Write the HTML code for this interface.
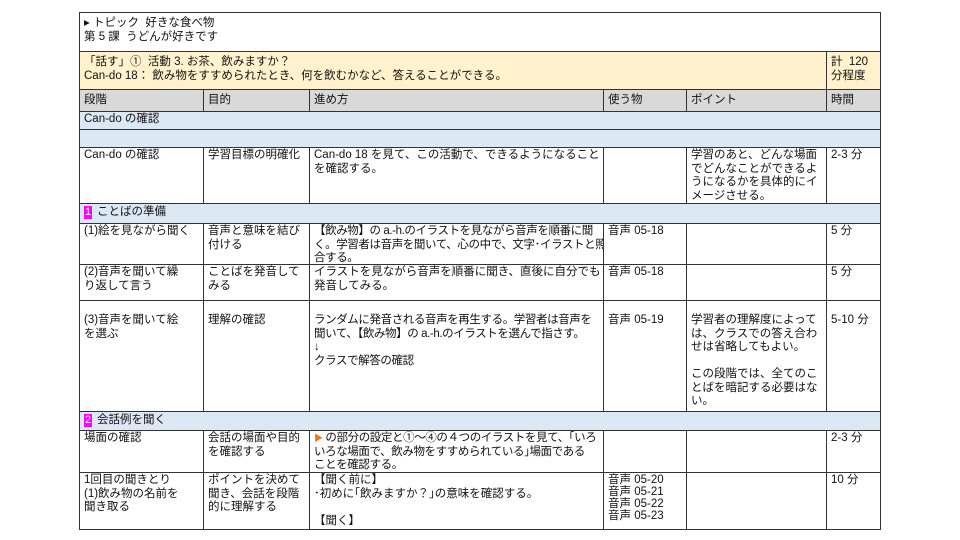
<!DOCTYPE html><html><head><meta charset="utf-8"><style>
body{margin:0;width:960px;height:540px;background:#fff;position:relative;overflow:hidden;font-family:"Liberation Sans","Noto Sans CJK JP",sans-serif;font-size:11.5px;line-height:13.5px;color:#111}
.c{position:absolute;box-sizing:border-box;border:1.5px solid #333;padding:1px 4px;margin:0;overflow:hidden;white-space:nowrap}
.y{background:#fff2cc}.g{background:#d9d9d9}.b{background:#dde8f5}
.t{letter-spacing:-0.4px}
.n{display:inline-block;background:#f0f;color:#fff;width:8px;height:13px;line-height:13px;text-align:center;margin-right:5px;font-size:11px}
</style></head><body>
<div class="c" style="left:79px;top:12px;width:802px;height:40px;padding-top:4px">▸ トピック&nbsp; 好きな食べ物<br>第 5 課&nbsp; うどんが好きです</div>
<div class="c y" style="left:79px;top:51px;width:748px;height:39px;padding-top:4px">「話す」①&nbsp; 活動 3. お茶、飲みますか？<br>Can-do 18：&nbsp;飲み物をすすめられたとき、何を飲むかなど、答えることができる。</div>
<div class="c y" style="left:826px;top:51px;width:55px;height:39px;padding-top:4px">計&nbsp; 120<br>分程度</div>
<div class="c g" style="left:79px;top:89px;width:125px;height:23px;padding-top:4px">段階</div>
<div class="c g" style="left:203px;top:89px;width:107px;height:23px;padding-top:4px">目的</div>
<div class="c g" style="left:309px;top:89px;width:295px;height:23px;padding-top:4px">進め方</div>
<div class="c g" style="left:603px;top:89px;width:84px;height:23px;padding-top:4px">使う物</div>
<div class="c g" style="left:686px;top:89px;width:141px;height:23px;padding-top:4px">ポイント</div>
<div class="c g" style="left:826px;top:89px;width:55px;height:23px;padding-top:4px">時間</div>
<div class="c b" style="left:79px;top:111px;width:802px;height:19px">Can-do の確認</div>
<div class="c b" style="left:79px;top:129px;width:802px;height:19px"></div>
<div class="c" style="left:79px;top:147px;width:125px;height:57px">Can-do の確認</div>
<div class="c" style="left:203px;top:147px;width:107px;height:57px">学習目標の明確化</div>
<div class="c" style="left:309px;top:147px;width:295px;height:57px">Can-do 18 を見て、この活動で、できるようになること<br>を確認する。</div>
<div class="c" style="left:603px;top:147px;width:84px;height:57px"></div>
<div class="c" style="left:686px;top:147px;width:141px;height:57px">学習のあと、どんな場面<br>でどんなことができるよ<br>うになるかを具体的にイ<br>メージさせる。</div>
<div class="c" style="left:826px;top:147px;width:55px;height:57px">2-3 分</div>
<div class="c b" style="left:79px;top:203px;width:802px;height:21px;padding-top:2px"><span class="n">1</span>ことばの準備</div>
<div class="c" style="left:79px;top:223px;width:125px;height:42px">(1)絵を見ながら聞く</div>
<div class="c" style="left:203px;top:223px;width:107px;height:42px">音声と意味を結び<br>付ける</div>
<div class="c t" style="left:309px;top:223px;width:295px;height:42px">【飲み物】の a.-h.のイラストを見ながら音声を順番に聞<br>く。学習者は音声を聞いて、心の中で、文字･イラストと照<br>合する。</div>
<div class="c" style="left:603px;top:223px;width:84px;height:42px">音声 05-18</div>
<div class="c" style="left:686px;top:223px;width:141px;height:42px"></div>
<div class="c" style="left:826px;top:223px;width:55px;height:42px">5 分</div>
<div class="c" style="left:79px;top:264px;width:125px;height:37px">(2)音声を聞いて繰<br>り返して言う</div>
<div class="c" style="left:203px;top:264px;width:107px;height:37px">ことばを発音して<br>みる</div>
<div class="c" style="left:309px;top:264px;width:295px;height:37px">イラストを見ながら音声を順番に聞き、直後に自分でも<br>発音してみる。</div>
<div class="c" style="left:603px;top:264px;width:84px;height:37px">音声 05-18</div>
<div class="c" style="left:686px;top:264px;width:141px;height:37px"></div>
<div class="c" style="left:826px;top:264px;width:55px;height:37px">5 分</div>
<div class="c" style="left:79px;top:300px;width:125px;height:112px;padding-top:13px">(3)音声を聞いて絵<br>を選ぶ</div>
<div class="c" style="left:203px;top:300px;width:107px;height:112px;padding-top:13px">理解の確認</div>
<div class="c t" style="left:309px;top:300px;width:295px;height:112px;padding-top:13px">ランダムに発音される音声を再生する。学習者は音声を<br>聞いて、【飲み物】の a.-h.のイラストを選んで指さす。<br>↓<br>クラスで解答の確認</div>
<div class="c" style="left:603px;top:300px;width:84px;height:112px;padding-top:13px">音声 05-19</div>
<div class="c" style="left:686px;top:300px;width:141px;height:112px;padding-top:13px">学習者の理解度によって<br>は、クラスでの答え合わ<br>せは省略してもよい。<br><br>この段階では、全てのこ<br>とばを暗記する必要はな<br>い。</div>
<div class="c" style="left:826px;top:300px;width:55px;height:112px;padding-top:13px">5-10 分</div>
<div class="c b" style="left:79px;top:411px;width:802px;height:20px;padding-top:2px"><span class="n">2</span>会話例を聞く</div>
<div class="c" style="left:79px;top:430px;width:125px;height:43px">場面の確認</div>
<div class="c" style="left:203px;top:430px;width:107px;height:43px">会話の場面や目的<br>を確認する</div>
<div class="c t" style="left:309px;top:430px;width:295px;height:43px"><span style="color:#e87a1e;font-size:9px">▶</span> の部分の設定と①～④の４つのイラストを見て、｢いろ<br>いろな場面で、飲み物をすすめられている｣場面である<br>ことを確認する。</div>
<div class="c" style="left:603px;top:430px;width:84px;height:43px"></div>
<div class="c" style="left:686px;top:430px;width:141px;height:43px"></div>
<div class="c" style="left:826px;top:430px;width:55px;height:43px">2-3 分</div>
<div class="c" style="left:79px;top:472px;width:125px;height:58px">1回目の聞きとり<br>(1)飲み物の名前を<br>聞き取る</div>
<div class="c" style="left:203px;top:472px;width:107px;height:58px">ポイントを決めて<br>聞き、会話を段階<br>的に理解する</div>
<div class="c" style="left:309px;top:472px;width:295px;height:58px">【聞く前に】<br>･初めに｢飲みますか？｣の意味を確認する。<br><br>【聞く】</div>
<div class="c" style="left:603px;top:472px;width:84px;height:58px;line-height:12px">音声 05-20<br>音声 05-21<br>音声 05-22<br>音声 05-23</div>
<div class="c" style="left:686px;top:472px;width:141px;height:58px"></div>
<div class="c" style="left:826px;top:472px;width:55px;height:58px">10 分</div>
</body></html>
